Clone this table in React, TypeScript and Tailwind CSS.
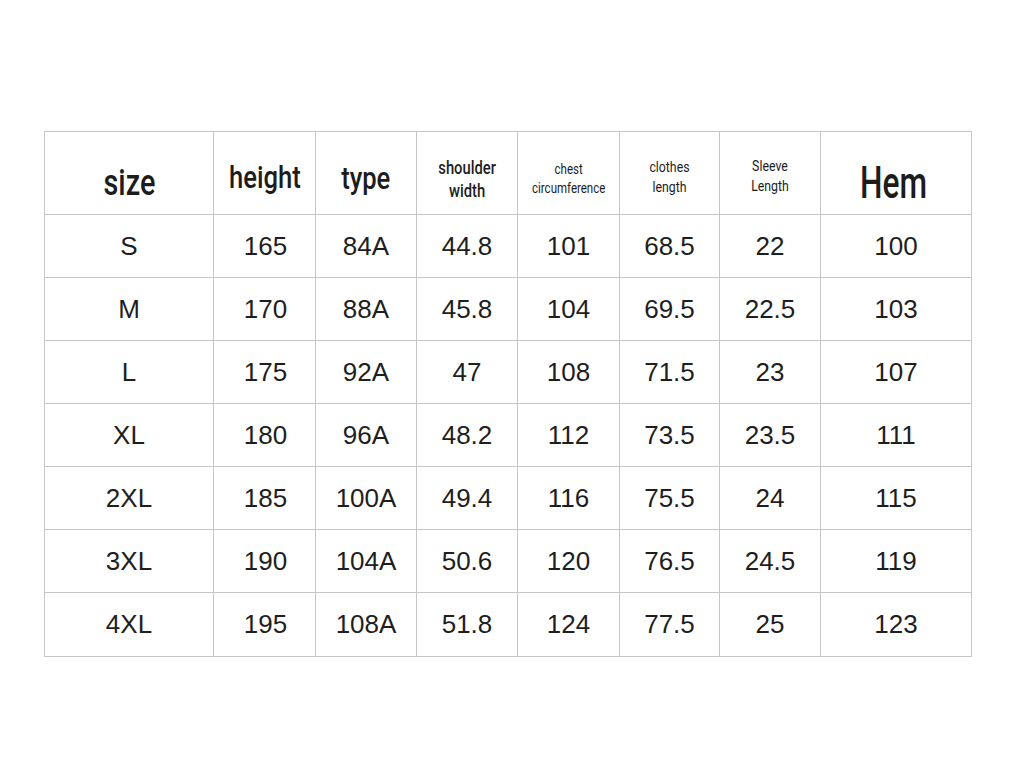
import React from "react";

const rows = [
  ["S", "165", "84A", "44.8", "101", "68.5", "22", "100"],
  ["M", "170", "88A", "45.8", "104", "69.5", "22.5", "103"],
  ["L", "175", "92A", "47", "108", "71.5", "23", "107"],
  ["XL", "180", "96A", "48.2", "112", "73.5", "23.5", "111"],
  ["2XL", "185", "100A", "49.4", "116", "75.5", "24", "115"],
  ["3XL", "190", "104A", "50.6", "120", "76.5", "24.5", "119"],
  ["4XL", "195", "108A", "51.8", "124", "77.5", "25", "123"],
];

const widths = ["w-[169px]", "w-[102px]", "w-[101px]", "w-[101px]", "w-[102px]", "w-[100px]", "w-[101px]", "w-[150px]"];

export default function App() {
  return (
    <div className="w-[1015px] h-[762px] bg-white pt-[131px] pl-[44px]" style={{ fontFamily: "'Liberation Sans', Arial, sans-serif" }}>
      <div className="w-[928px] border border-[#c6c6c6] flex flex-col">
        <div className="flex h-[83px] border-b border-[#c6c6c6] text-[#1c1c1c] font-['Roboto',sans-serif]">
          <div className={`${widths[0]} flex items-center justify-center pt-[20px] border-r border-[#c6c6c6]`}>
            <span className="inline-block scale-x-[0.8] text-[36px] font-medium leading-none">size</span>
          </div>
          <div className={`${widths[1]} flex items-center justify-center pt-[8px] border-r border-[#c6c6c6]`}>
            <span className="inline-block scale-x-[0.8] text-[32px] font-medium leading-none">height</span>
          </div>
          <div className={`${widths[2]} flex items-center justify-center pt-[10px] border-r border-[#c6c6c6]`}>
            <span className="inline-block scale-x-[0.8] text-[32px] font-medium leading-none">type</span>
          </div>
          <div className={`${widths[3]} flex items-center justify-center pt-[12px] border-r border-[#c6c6c6]`}>
            <span className="inline-block scale-x-[0.82] text-[18px] font-medium leading-[23px] text-center">shoulder<br />width</span>
          </div>
          <div className={`${widths[4]} flex items-center justify-center pt-[12px] border-r border-[#c6c6c6]`}>
            <span className="inline-block scale-x-[0.82] text-[14px] leading-[19px] text-center whitespace-nowrap">chest<br />circumference</span>
          </div>
          <div className={`${widths[5]} flex items-center justify-center pt-[8px] border-r border-[#c6c6c6]`}>
            <span className="inline-block scale-x-[0.82] text-[15px] leading-[20px] text-center">clothes<br />length</span>
          </div>
          <div className={`${widths[6]} flex items-center justify-center pt-[6px] border-r border-[#c6c6c6]`}>
            <span className="inline-block scale-x-[0.82] text-[15px] leading-[20px] text-center">Sleeve<br />Length</span>
          </div>
          <div className={`${widths[7]} flex items-center justify-center pt-[20px] pr-[4px]`}>
            <span className="inline-block scale-x-[0.72] text-[44px] font-medium leading-none">Hem</span>
          </div>
        </div>
        {rows.map((r, i) => (
          <div key={i} className={`flex h-[63px] ${i < rows.length - 1 ? "border-b border-[#c6c6c6]" : ""}`}>
            {r.map((c, j) => (
              <div
                key={j}
                className={`${widths[j]} flex items-center justify-center text-[26px] text-[#1e1e1e] ${j < 7 ? "border-r border-[#c6c6c6]" : ""} ${j === 1 ? "pl-[2px]" : ""}`}
              >
                {c}
              </div>
            ))}
          </div>
        ))}
      </div>
    </div>
  );
}
